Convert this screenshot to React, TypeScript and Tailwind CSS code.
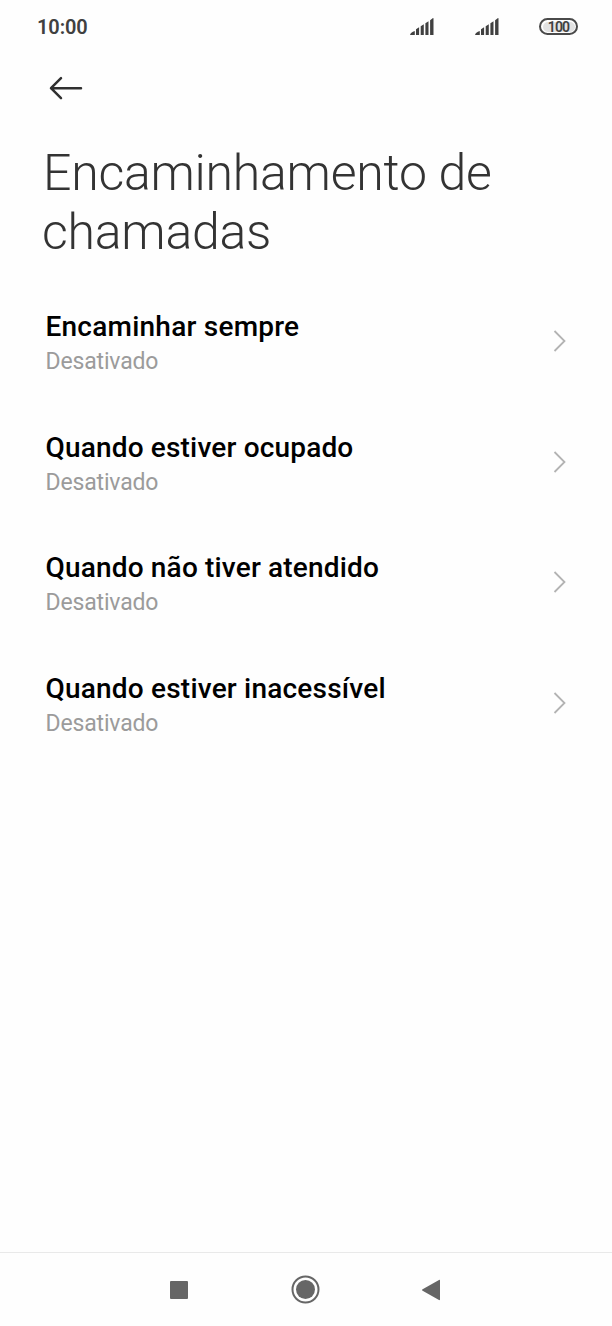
import { clsx } from "clsx"

const options = [
  { title: "Encaminhar sempre", status: "Desativado", spacing: "tracking-[0.23px]" },
  { title: "Quando estiver ocupado", status: "Desativado", spacing: "tracking-[0.17px]" },
  { title: "Quando não tiver atendido", status: "Desativado", spacing: "tracking-[0.17px]" },
  { title: "Quando estiver inacessível", status: "Desativado", spacing: "tracking-[0.2px]" },
]

function Signal() {
  return (
    <svg width="24" height="18" viewBox="0 0 24 18" fill="#404040">
      <path d="M.2 16.9c-.4-1.2 1.5-3.2 4.6-4V17H.4zM6 11.3l3.1-2V17H6zM10.7 8.2l3.1-2V17h-3.1zM15.4 5.2l3.1-2V17h-3.1zM20.1 2.2l2.6-2c.4-.3.8-.1.8.4V17h-3.4z" />
    </svg>
  )
}

function Battery() {
  return (
    <div className="flex h-[17px] w-[39px] items-center justify-center rounded-full border-2 border-[#4a4a4a] p-[1.5px]">
      <span className="flex h-full w-full items-center justify-center rounded-full bg-[#e2e2e2] text-[14px] leading-none font-semibold tracking-[-0.9px] text-[#404040]">
        100
      </span>
    </div>
  )
}

function StatusBar() {
  return (
    <div className="flex h-[54px] items-center pr-[34px] pl-[37px]">
      <span className="grow text-[20px] leading-6 font-semibold tracking-[-0.1px] text-[#404040]">10:00</span>
      <div className="flex items-center pb-px">
        <Signal />
        <div className="ml-[41px]">
          <Signal />
        </div>
        <div className="ml-[40px]">
          <Battery />
        </div>
      </div>
    </div>
  )
}

function NavigationBar() {
  return (
    <nav className="flex h-[74px] items-center border-t border-[#e9e9e9] pl-[170px]">
      <button aria-label="Recentes">
        <svg width="18" height="18" viewBox="0 0 18 18" fill="#666">
          <rect width="18" height="18" rx="1" />
        </svg>
      </button>
      <button aria-label="Início" className="ml-[103px]">
        <svg width="29" height="29" viewBox="0 0 29 29" fill="none">
          <circle cx="14.5" cy="14.5" r="13" stroke="#666" strokeWidth="2" />
          <circle cx="14.5" cy="14.5" r="9.5" fill="#666" />
        </svg>
      </button>
      <button aria-label="Voltar" className="ml-[101px]">
        <svg width="20" height="22" viewBox="0 0 20 22" fill="#666">
          <path d="M1.6 10.2 18 .9c.5-.3 1 0 1 .5v19.2c0 .5-.5.8-1 .5L1.6 11.8c-.7-.4-.7-1.2 0-1.6z" />
        </svg>
      </button>
    </nav>
  )
}

export default function App() {
  return (
    <div className="flex h-[1326px] w-[612px] flex-col bg-[#fefefe] font-['Roboto',sans-serif]">
      <StatusBar />
      <header>
        <button aria-label="Voltar" className="mt-[22px] ml-[49px] block">
          <svg width="34" height="24" viewBox="0 0 34 24" fill="none" stroke="#303030" strokeWidth="2.5" strokeLinecap="round" strokeLinejoin="round">
            <path d="M32 12.2H2M12 2.2l-10 10 10 10" />
          </svg>
        </button>
        <h1 className="mt-[44px] ml-[43px] text-[50px] leading-[58.5px] font-light tracking-[-0.25px] text-[#333]">
          Encaminhamento de
          <br />
          <span className="-ml-px">chamadas</span>
        </h1>
      </header>
      <main className="mt-[19.7px] grow">
        {options.map((option) => (
          <div key={option.title} className="flex h-[120.67px] items-center pr-[45px] pl-[45.5px]">
            <div className="grow pt-[3px]">
              <h2 className={clsx("text-[28px] leading-[33px] font-medium text-black", option.spacing)}>
                {option.title}
              </h2>
              <p className="mt-[5px] text-[23px] leading-[27px] tracking-[-0.16px] text-[#9b9b9b]">{option.status}</p>
            </div>
            <svg width="14" height="22" viewBox="0 0 14 22" fill="none" stroke="#b3b3b3" strokeWidth="1.8">
              <path d="M1.5 1l10 10-10 10" />
            </svg>
          </div>
        ))}
      </main>
      <NavigationBar />
    </div>
  )
}
